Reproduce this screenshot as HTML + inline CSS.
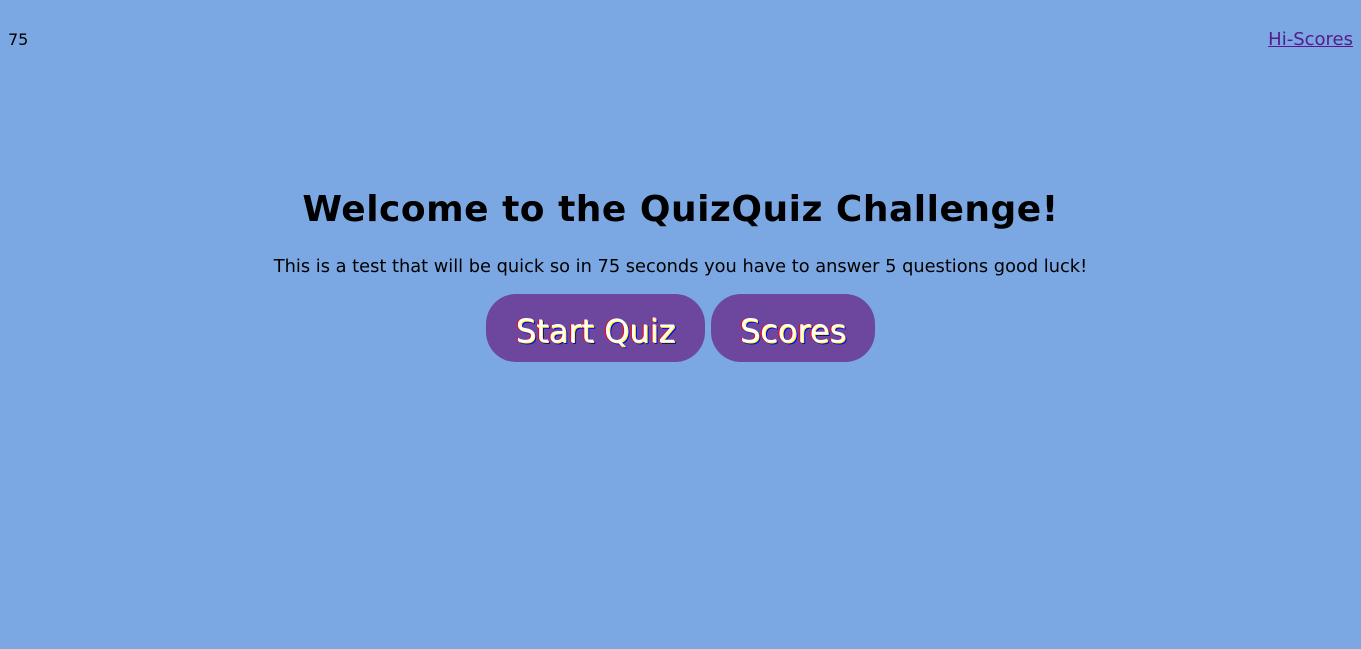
<!DOCTYPE html>
<html><head><style>
body{margin:0;background:#7ba7e3;font-family:"DejaVu Sans","Liberation Sans",sans-serif;width:1361px;height:649px;overflow:hidden;position:relative}
.t{position:absolute;left:8px;top:30px;font-size:16px;color:#000}
.h{position:absolute;right:8px;top:29px;font-size:18px;color:#551a8b;text-decoration:underline}
h1{position:absolute;top:189px;left:0;width:100%;text-align:center;margin:0;font-size:36px;letter-spacing:0.5px}
p{position:absolute;top:256px;left:0;width:100%;text-align:center;margin:0;font-size:17.8px}
.b{position:absolute;top:294px;height:68px;background:#6d479d;border-radius:30px;color:#fff;font-size:32px;line-height:74px;text-align:center;text-shadow:1px 1px 0 #ff0,2px 2px 0 #00f,-1px 0 0 #f00}
</style></head><body>
<div class="t">75</div>
<div class="h">Hi-Scores</div>
<h1>Welcome to the QuizQuiz Challenge!</h1>
<p>This is a test that will be quick so in 75 seconds you have to answer 5 questions good luck!</p>
<div class="b" style="left:486px;width:219px">Start Quiz</div>
<div class="b" style="left:711px;width:164px">Scores</div>
</body></html>
